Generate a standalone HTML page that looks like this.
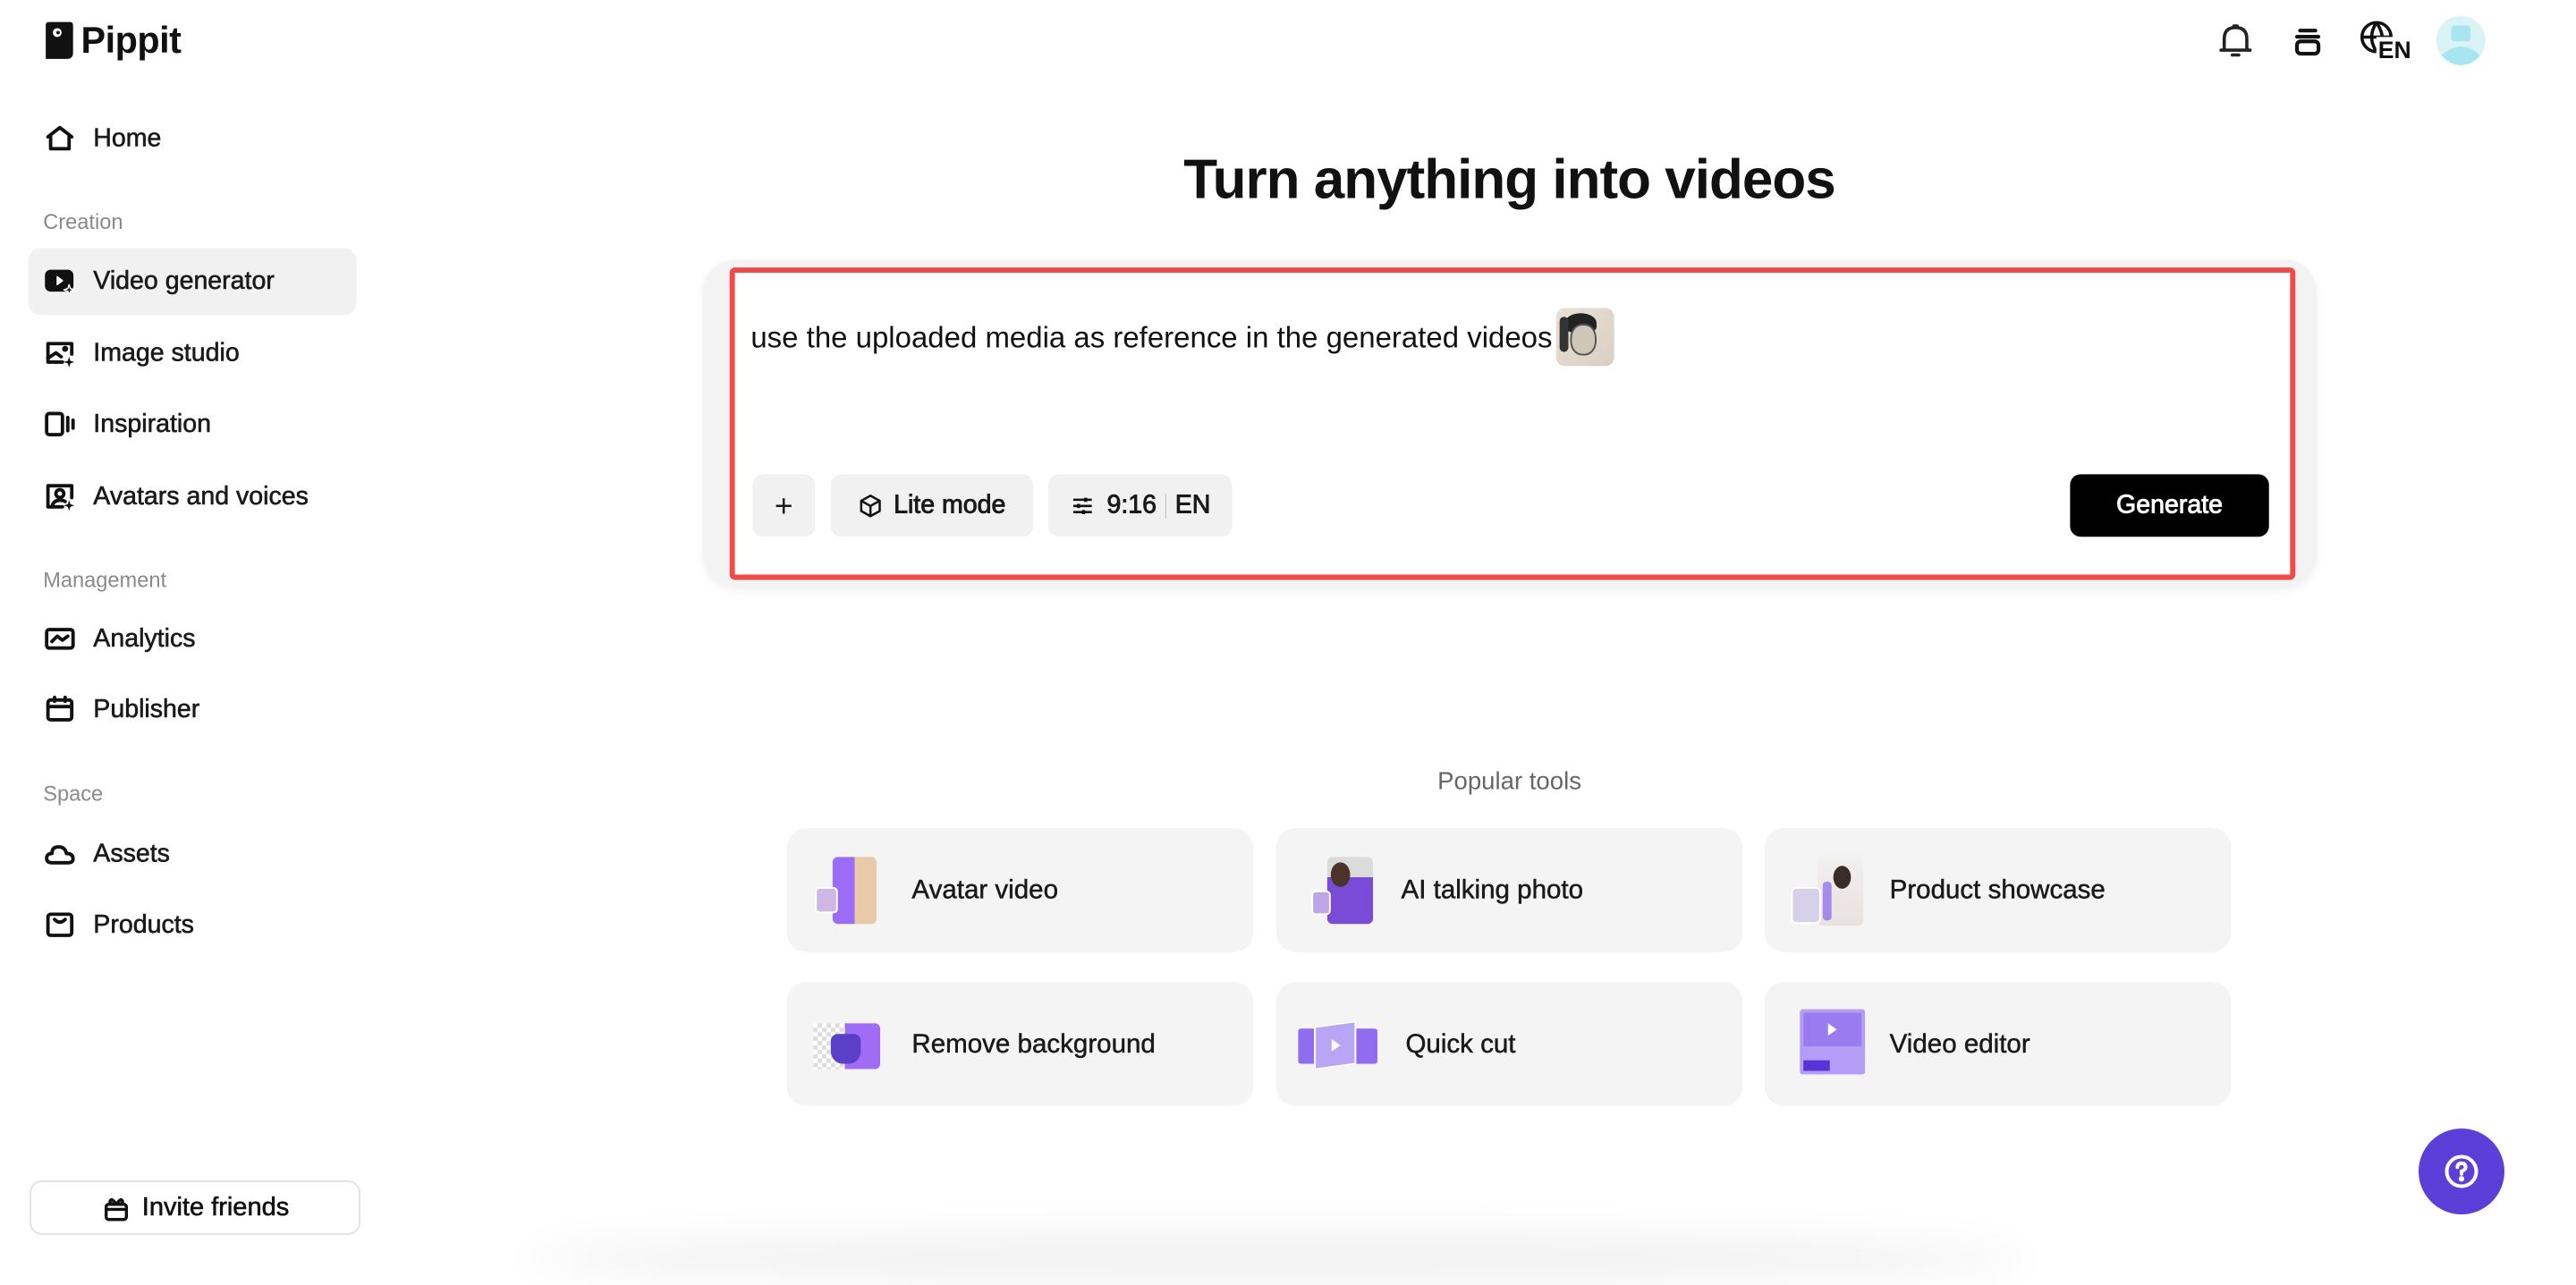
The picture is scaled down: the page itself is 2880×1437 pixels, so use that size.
<!DOCTYPE html>
<html><head><meta charset="utf-8"><style>
*{box-sizing:border-box;margin:0;padding:0}
body{width:2880px;height:1400px;overflow:hidden;background:#fff;font-family:"Liberation Sans",sans-serif;color:#111;position:relative}
#s{position:absolute;left:0;top:0;width:2880px;height:1400px;transform:scale(0.984);transform-origin:0 0}
.abs{position:absolute}
.med{-webkit-text-stroke:0.6px currentColor}
.nav{position:absolute;left:50px;display:flex;align-items:center;font-size:29px;color:#1a1a1a;height:40px;-webkit-text-stroke:0.6px #1a1a1a}
.nav svg{width:36px;height:36px;margin-right:20px;fill:none;stroke:#111;stroke-width:2.6;stroke-linejoin:round;stroke-linecap:round}
.sec{position:absolute;left:49px;font-size:24px;color:#8a8a8a}
.btn{position:absolute;top:539px;height:71px;background:#f1f1f1;border-radius:12px;display:flex;align-items:center;justify-content:center;font-size:29px;color:#1a1a1a;-webkit-text-stroke:0.9px currentColor}
.card{position:absolute;width:530px;height:141px;background:#f4f4f4;border-radius:22px;display:flex;align-items:center;font-size:30px;color:#1a1a1a;-webkit-text-stroke:0.5px #1a1a1a}
.card .ic{width:80px;height:80px;margin-left:30px;margin-right:32px;position:relative;-webkit-text-stroke:0}
</style></head><body>
<div id="s">
<svg class="abs" style="left:50px;top:24px" width="34" height="44" viewBox="0 0 34 44"><path d="M2 4 Q2 1 6 1 L30 1 Q33 1 33 5 L33 36 Q33 43 26 43 L2 43 Z" fill="#111"/><circle cx="15" cy="13" r="5" fill="#fff"/><circle cx="16" cy="13" r="2" fill="#111"/></svg>
<div class="abs" style="left:92px;top:22px;font-size:42px;font-weight:bold;letter-spacing:-0.5px">Pippit</div>

<div class="nav" style="top:137px"><svg viewBox="0 0 24 24"><path d="M3 11 L12 4 L21 11 M5 9.5 V20 H19 V9.5"/></svg>Home</div>
<div class="sec" style="top:239px">Creation</div>
<div class="abs" style="left:32px;top:282px;width:373px;height:76px;background:#f1f1f1;border-radius:14px"></div>
<div class="nav" style="top:299px"><svg viewBox="0 0 24 24"><rect x="2" y="5" width="19" height="14" rx="3" fill="#111"/><path d="M10 9 L14 12 L10 15Z" fill="#fff" stroke="#fff" stroke-width="1"/><path d="M19 15 L20 18 L23 19 L20 20 L19 23 L18 20 L15 19 L18 18Z" fill="#111" stroke="#fff" stroke-width="1"/></svg>Video generator</div>
<div class="nav" style="top:381px"><svg viewBox="0 0 24 24"><path d="M14 19 H3 V5 H21 V13"/><path d="M3 16 L9 12 L13 15"/><circle cx="16" cy="9" r="1" fill="#111"/><path d="M19 15 L20 18 L23 19 L20 20 L19 23 L18 20 L15 19 L18 18Z" fill="#111" stroke="none"/></svg>Image studio</div>
<div class="nav" style="top:462px"><svg viewBox="0 0 24 24"><rect x="2" y="4" width="12" height="16" rx="2"/><path d="M18 7 V17 M22 9 V15"/></svg>Inspiration</div>
<div class="nav" style="top:544px"><svg viewBox="0 0 24 24"><path d="M14 20 H3 V4 H21 V13"/><circle cx="12" cy="10" r="3"/><path d="M6 20 Q7 15 12 15 Q15 15 16 16"/><path d="M19 15 L20 18 L23 19 L20 20 L19 23 L18 20 L15 19 L18 18Z" fill="#111" stroke="none"/></svg>Avatars and voices</div>
<div class="sec" style="top:646px">Management</div>
<div class="nav" style="top:706px"><svg viewBox="0 0 24 24"><rect x="2" y="5" width="20" height="14" rx="2"/><path d="M6 14 L10 10 L14 13 L18 10"/></svg>Analytics</div>
<div class="nav" style="top:786px"><svg viewBox="0 0 24 24"><rect x="3" y="5" width="18" height="15" rx="2"/><path d="M3 10 H21 M8 3 V6 M16 3 V6"/></svg>Publisher</div>
<div class="sec" style="top:889px">Space</div>
<div class="nav" style="top:950px"><svg viewBox="0 0 24 24"><path d="M6 19 H18 Q22 19 22 16 Q22 12 17 12 Q16 7 11 7 Q6 7 6 12 Q2 12 2 15.5 Q2 19 6 19Z"/></svg>Assets</div>
<div class="nav" style="top:1031px"><svg viewBox="0 0 24 24"><rect x="3" y="4" width="18" height="16" rx="2"/><path d="M8 8 Q12 12 16 8"/></svg>Products</div>

<svg class="abs" style="left:2518px;top:24px" width="44" height="44" viewBox="0 0 24 24" fill="none" stroke="#222" stroke-width="2" stroke-linecap="round"><path d="M5 18 V11 Q5 4 12 4 Q19 4 19 11 V18 M3 18 H21 M10 21 H14 M11 3 H13"/></svg>
<svg class="abs" style="left:2601px;top:26px" width="42" height="42" viewBox="0 0 24 24" fill="none" stroke="#111" stroke-width="2.4" stroke-linecap="round"><path d="M7 5 H17 M5 9 H19"/><rect x="5" y="12" width="14" height="8" rx="2.5"/></svg>
<svg class="abs" style="left:2680px;top:22px" width="44" height="44" viewBox="0 0 24 24" fill="none" stroke="#111" stroke-width="2"><circle cx="11" cy="11" r="9"/><path d="M2 11 H20 M11 2 Q5 11 11 20 M11 2 Q17 11 13 17"/></svg>
<div class="abs" style="left:2700px;top:42px;font-size:27px;font-weight:bold;background:#fff;padding-left:2px;line-height:30px">EN</div>
<svg class="abs" style="left:2768px;top:18px" width="56" height="56" viewBox="0 0 56 56"><circle cx="28" cy="28" r="28" fill="#d9f3f7"/><rect x="17" y="11" width="22" height="18" rx="4" fill="#a7e6f0"/><path d="M6 45 Q28 25 50 45 Q40 56 28 56 Q16 56 6 45Z" fill="#a7e6f0"/></svg>

<div class="abs" style="left:0;width:3430px;top:168px;text-align:center;font-size:63px;font-weight:bold;letter-spacing:-1px">Turn anything into videos</div>

<div class="abs" style="left:799px;top:295px;width:1833px;height:372px;background:#f3f3f3;border-radius:36px;box-shadow:0 4px 10px rgba(0,0,0,0.06)"></div>
<div class="abs" style="left:829px;top:304px;width:1779px;height:355px;background:#fff;border:6px solid #ef4b4b;border-radius:6px"></div>
<div class="abs" style="left:853px;top:354px;font-size:33.5px;color:#111;display:flex;align-items:center">use the uploaded media as reference in the generated videos<div style="position:relative;margin-left:4px;margin-top:-4px;width:66px;height:66px;border-radius:10px;background:linear-gradient(135deg,#e9e1d6,#d9cfc2);overflow:hidden">
<div style="position:absolute;left:10px;top:6px;width:36px;height:22px;border-radius:50% 50% 30% 30%;background:#222"></div>
<div style="position:absolute;left:16px;top:18px;width:30px;height:36px;border-radius:45%;background:#cfc6ba;border:2px solid #555"></div>
<div style="position:absolute;left:4px;top:10px;width:10px;height:40px;background:#333;border-radius:5px"></div></div></div>

<div class="btn" style="left:855px;width:71px;font-size:36px;-webkit-text-stroke:0">+</div>
<div class="btn" style="left:944px;width:230px"><svg width="28" height="30" viewBox="0 0 24 24" fill="none" stroke="#111" stroke-width="2.2" stroke-linejoin="round" style="margin-right:12px"><path d="M12 2 L21 7 V17 L12 22 L3 17 V7Z M3 7 L12 12 L21 7 M12 12 V22"/></svg>Lite mode</div>
<div class="btn" style="left:1191px;width:209px"><svg width="28" height="28" viewBox="0 0 24 24" fill="none" stroke="#111" stroke-width="2.2" style="margin-right:14px"><path d="M3 6 H21 M3 12 H21 M3 18 H21"/><path d="M15 4 V8 M8 10 V14 M13 16 V20" stroke-width="3"/></svg>9:16<span style="display:inline-block;width:1px;height:28px;background:#bbb;margin:0 10px"></span>EN</div>
<div class="btn" style="left:2352px;width:226px;background:#000;color:#fff">Generate</div>

<div class="abs" style="left:0;width:3430px;top:872px;text-align:center;font-size:28px;color:#666">Popular tools</div>

<div class="card" style="left:894px;top:941px"><div class="ic"><div style="position:absolute;left:22px;top:2px;width:50px;height:76px;border-radius:6px;background:linear-gradient(90deg,#9b6cf7 50%,#e8c9a8 50%)"></div><div style="position:absolute;left:2px;top:36px;width:26px;height:30px;border-radius:5px;background:#cfb7e6;border:2px solid #fff"></div></div>Avatar video</div>
<div class="card" style="left:1450px;top:941px"><div class="ic"><div style="position:absolute;left:28px;top:2px;width:52px;height:76px;border-radius:6px;background:linear-gradient(180deg,#d9dcd9 30%,#7a4bd6 30%)"></div><div style="position:absolute;left:32px;top:8px;width:22px;height:28px;border-radius:50%;background:#4a342a"></div><div style="position:absolute;left:10px;top:40px;width:22px;height:28px;border-radius:5px;background:#bca6e3;border:2px solid #fff"></div></div>AI talking photo</div>
<div class="card" style="left:2005px;top:941px"><div class="ic"><div style="position:absolute;left:30px;top:0;width:52px;height:80px;border-radius:6px;background:linear-gradient(180deg,#f2f0f0,#e8e1df)"></div><div style="position:absolute;left:48px;top:12px;width:20px;height:26px;border-radius:50%;background:#3b2c28"></div><div style="position:absolute;left:36px;top:30px;width:10px;height:44px;border-radius:4px;background:#a68bea"></div><div style="position:absolute;left:0;top:36px;width:34px;height:42px;border-radius:6px;background:#d6d1e8;border:2px solid #fff"></div></div>Product showcase</div>
<div class="card" style="left:894px;top:1116px"><div class="ic"><div style="position:absolute;left:0;top:16px;width:36px;height:52px;background:repeating-conic-gradient(#ddd 0 25%,#fff 0 50%) 0 0/10px 10px"></div><div style="position:absolute;left:36px;top:16px;width:40px;height:52px;border-radius:0 6px 6px 0;background:#a06cf6"></div><div style="position:absolute;left:20px;top:28px;width:34px;height:34px;border-radius:8px 8px 14px 14px;background:#5a3fc8"></div></div>Remove background</div>
<div class="card" style="left:1450px;top:1116px"><div class="ic" style="margin-left:25px;width:90px;margin-right:32px"><div style="position:absolute;left:0;top:22px;width:90px;height:40px;border-radius:3px;background:#8f6cf0"></div><div style="position:absolute;left:18px;top:16px;width:48px;height:50px;background:#b9a5f5;border:2px solid #fff;transform:skewY(-8deg)"></div><div style="position:absolute;left:38px;top:34px;width:0;height:0;border-left:10px solid #fff;border-top:7px solid transparent;border-bottom:7px solid transparent"></div></div>Quick cut</div>
<div class="card" style="left:2005px;top:1116px"><div class="ic"><div style="position:absolute;left:10px;top:0;width:74px;height:74px;border-radius:3px;background:#b49cf7"></div><div style="position:absolute;left:14px;top:4px;width:66px;height:38px;background:#9a7cf0"></div><div style="position:absolute;left:42px;top:16px;width:0;height:0;border-left:10px solid #fff;border-top:7px solid transparent;border-bottom:7px solid transparent"></div><div style="position:absolute;left:14px;top:58px;width:30px;height:12px;background:#5a33d6"></div></div>Video editor</div>

<div class="abs" style="left:600px;top:1400px;width:1700px;height:60px;border-radius:50%;background:rgba(0,0,0,0.05);filter:blur(20px)"></div>
</div>

<div class="abs" style="left:33px;top:1320px;width:370px;height:61px;border:2px solid #e3e3e3;border-radius:14px;display:flex;align-items:center;justify-content:center;font-size:29px;-webkit-text-stroke:0.6px #111">
<svg width="34" height="36" viewBox="0 0 24 24" style="margin-right:12px" fill="none" stroke="#111" stroke-width="2.4" stroke-linejoin="round"><rect x="4" y="9" width="16" height="12" rx="2"/><path d="M4 13 H20 M12 9 Q8 3 7 7 Q7 9 12 9 Q17 9 17 7 Q16 3 12 9"/></svg>Invite friends</div>

<div class="abs" style="left:2704px;top:1262px;width:96px;height:96px;border-radius:50%;background:#5b3fd9"></div>
<svg class="abs" style="left:2730px;top:1288px" width="44" height="44" viewBox="0 0 24 24" fill="none" stroke="#fff" stroke-width="2.2" stroke-linecap="round"><circle cx="12" cy="12" r="9"/><path d="M9.5 9.5 Q9.5 7 12 7 Q14.5 7 14.5 9.5 Q14.5 11 12 12 V13.5"/><circle cx="12" cy="16.5" r="0.6" fill="#fff"/></svg>
</body></html>
